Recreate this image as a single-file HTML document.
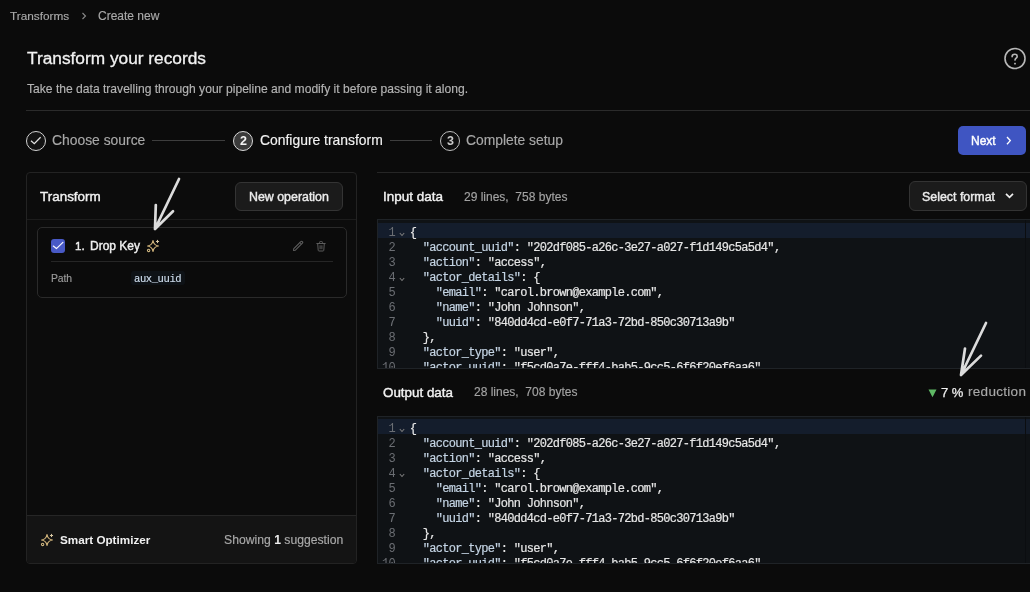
<!DOCTYPE html>
<html><head><meta charset="utf-8"><style>
html,body{margin:0;padding:0;}
body{width:1030px;height:592px;overflow:hidden;background:#0b0b0b;position:relative;font-family:"Liberation Sans",sans-serif;}
.t{position:absolute;white-space:pre;line-height:1;will-change:transform;}
.r{position:absolute;box-sizing:border-box;}
.code{will-change:transform;position:absolute;box-sizing:border-box;background:#0f1215;border:1px solid #1f2327;border-right:none;overflow:hidden;font-family:"Liberation Mono",monospace;font-size:12px;letter-spacing:-0.70px;}
.code .hl{position:absolute;left:0;top:2.8px;width:100%;height:15px;background:#141d2c;}
.code .sb{position:absolute;left:647px;top:0;width:1px;height:100%;background:#0b0d10;}
.code .ln{position:absolute;left:0;width:17px;text-align:right;color:#6b6e73;line-height:15px;}
.code .fold{position:absolute;left:21px;}
.code .cl{position:absolute;color:#e6e6e6;line-height:15px;white-space:pre;-webkit-text-stroke:0.2px #e6e6e6;}
.code k{color:#c4d4e4;-webkit-text-stroke:0.2px #c4d4e4;}
</style></head><body>
<div class="t" style="left:9.5px;top:10.51px;font-size:11.8px;color:#a9a9a9;font-weight:normal;-webkit-text-stroke:0.15px #a9a9a9;">Transforms</div>
<svg class="r" style="left:80px;top:11px" width="8" height="10" viewBox="0 0 8 10"><path d="M2.5 2 L5.5 5 L2.5 8" stroke="#8a8a8a" stroke-width="1.1" fill="none"/></svg>
<div class="t" style="left:97.5px;top:10.34px;font-size:12px;color:#a9a9a9;font-weight:normal;-webkit-text-stroke:0.15px #a9a9a9;">Create new</div>
<div class="t" style="left:26.5px;top:50.46px;font-size:17.3px;color:#f2f2f2;font-weight:normal;-webkit-text-stroke:0.3px #f2f2f2;">Transform your records</div>
<div class="t" style="left:26.5px;top:83.06px;font-size:12.1px;color:#b4b4b4;font-weight:normal;-webkit-text-stroke:0.15px #b4b4b4;">Take the data travelling through your pipeline and modify it before passing it along.</div>
<svg class="r" style="left:1003px;top:47px" width="24" height="24" viewBox="0 0 24 24"><circle cx="12" cy="11.5" r="10" stroke="#b8b8b8" stroke-width="1.6" fill="none"/><path d="M9.1 9.7 C9.1 8.1 10.3 7.2 11.7 7.2 C13.1 7.2 14.2 8.1 14.2 9.4 C14.2 11 12 11.3 12 13.1" stroke="#b8b8b8" stroke-width="1.6" fill="none" stroke-linecap="round"/><rect x="11.1" y="15.8" width="1.8" height="1.6" rx="0.4" fill="#b8b8b8"/></svg>
<div class="r" style="left:26px;top:110px;width:1004px;height:1px;background:#2b2b2b"></div>
<div class="r" style="left:25.5px;top:130.7px;width:20.2px;height:20.2px;border:1.25px solid #d2d2d2;border-radius:50%;background:#131313"></div>
<svg class="r" style="left:24px;top:130px" width="24" height="22" viewBox="0 0 24 22"><path d="M7 10.8 L10.3 13.7 L16.6 7.3" stroke="#e2e2e2" stroke-width="1.25" fill="none"/></svg>
<div class="t" style="left:52px;top:133.85px;font-size:13.88px;color:#a8a8a8;font-weight:normal;-webkit-text-stroke:0.15px #a8a8a8;">Choose source</div>
<div class="r" style="left:152px;top:140px;width:72.5px;height:1px;background:#3e3e3e"></div>
<div class="r" style="left:232.8px;top:130.7px;width:20.2px;height:20.2px;border:1.3px solid #d8d8d8;border-radius:50%;background:#3b3b3b"></div>
<div class="t" style="left:239.8px;top:135.42px;font-size:12.5px;color:#f4f4f4;font-weight:bold;">2</div>
<div class="t" style="left:259.5px;top:133.73px;font-size:13.9px;color:#f2f2f2;font-weight:normal;-webkit-text-stroke:0.15px #f2f2f2;">Configure transform</div>
<div class="r" style="left:389.5px;top:140px;width:42.0px;height:1px;background:#3e3e3e"></div>
<div class="r" style="left:440px;top:130.7px;width:20.2px;height:20.2px;border:1.2px solid #bdbdbd;border-radius:50%;background:#0e0e0e"></div>
<div class="t" style="left:446.8px;top:135.42px;font-size:12.5px;color:#cacaca;font-weight:bold;">3</div>
<div class="t" style="left:466px;top:133.88px;font-size:13.85px;color:#a8a8a8;font-weight:normal;-webkit-text-stroke:0.15px #a8a8a8;">Complete setup</div>
<div class="r" style="left:958px;top:125.7px;width:68.3px;height:29.8px;border-radius:5px;background:#3f55c2"></div>
<div class="t" style="left:970.9px;top:134.84px;font-size:12px;color:#ffffff;font-weight:normal;-webkit-text-stroke:0.4px #ffffff;">Next</div>
<svg class="r" style="left:1003.6px;top:135.4px" width="9" height="11" viewBox="0 0 9 11"><path d="M3 2 L6.3 5.6 L3 9.2" stroke="#fff" stroke-width="1.35" fill="none"/></svg>
<div class="r" style="left:26px;top:172px;width:331px;height:392px;border:1px solid #232323;border-radius:4px;background:#0c0c0c;overflow:hidden"><div style="position:absolute;left:0;top:46px;width:100%;height:1px;background:#1c1c1c"></div><div style="position:absolute;left:0;top:342px;width:100%;height:48px;box-sizing:border-box;background:#141414;border-top:1px solid #262626"></div></div>
<div class="t" style="left:40px;top:189.91px;font-size:13.45px;color:#f2f2f2;font-weight:normal;-webkit-text-stroke:0.4px #f2f2f2;">Transform</div>
<div class="r" style="left:235.3px;top:181.5px;width:108px;height:29.5px;border:1px solid #343434;border-radius:6px;background:#1b1b1b"></div>
<div class="t" style="left:249px;top:190.90px;font-size:12.4px;color:#ededed;font-weight:normal;-webkit-text-stroke:0.4px #ededed;">New operation</div>
<div class="r" style="left:37px;top:227px;width:310px;height:71px;border:1px solid #2a2a2a;border-radius:5px;background:#0b0b0b"></div>
<div class="r" style="left:50.5px;top:261px;width:282.5px;height:1px;background:#262626"></div>
<div class="r" style="left:51px;top:238.9px;width:14.3px;height:14.3px;border-radius:3px;background:#4859c6"></div>
<svg class="r" style="left:51px;top:239px" width="15" height="15" viewBox="0 0 15 15"><path d="M2.3 7.1 L5.4 9.6 L11.9 3.4" stroke="#f4f6ff" stroke-width="1.25" fill="none" stroke-linecap="round" stroke-linejoin="round"/></svg>
<div class="t" style="left:74.8px;top:240.38px;font-size:11.6px;color:#f0f0f0;font-weight:normal;-webkit-text-stroke:0.4px #f0f0f0;">1.</div>
<div class="t" style="left:89.5px;top:240.14px;font-size:12px;color:#f0f0f0;font-weight:normal;-webkit-text-stroke:0.4px #f0f0f0;">Drop Key</div>
<svg class="r" style="left:146px;top:238.9px" width="14" height="14" viewBox="0 0 14 14"><path d="M7 1.5 Q7.75 6.25 12.4 7 Q7.75 7.75 7 12.4 Q6.25 7.75 1.6 7 Q6.25 6.25 7 1.5 Z" stroke="#d0b37a" stroke-width="1.2" fill="none" stroke-linejoin="round"/><path d="M11.5 1.4 L11.5 3.6 M10.4 2.5 L12.6 2.5" stroke="#ddcca6" stroke-width="1.1" stroke-linecap="round"/><circle cx="2.6" cy="11.4" r="1.2" stroke="#d2b982" stroke-width="1.05" fill="none"/></svg>
<svg class="r" style="left:291px;top:239px" width="14" height="14" viewBox="0 0 14 14"><path d="M2.5 11.5 L2.8 9.6 L9.8 2.6 C10.3 2.1 11 2.1 11.4 2.6 C11.9 3.1 11.9 3.7 11.4 4.2 L4.4 11.2 Z" stroke="#5e5e5e" stroke-width="1.1" fill="none" stroke-linejoin="round"/><path d="M8.8 3.6 L10.4 5.2" stroke="#5e5e5e" stroke-width="1"/></svg>
<svg class="r" style="left:315px;top:239px" width="12" height="14" viewBox="0 0 12 14"><path d="M1.8 4.5 H10.2 M4.6 4.5 V3.3 Q4.6 2.5 5.3 2.5 H6.7 Q7.4 2.5 7.4 3.3 V4.5 M2.7 4.5 L3.2 11.3 Q3.3 12 4 12 H8 Q8.7 12 8.8 11.3 L9.3 4.5 M5.1 6.7 V9.8 M6.9 6.7 V9.8" stroke="#5c5c5c" stroke-width="1" fill="none" stroke-linejoin="round" stroke-linecap="round"/></svg><div class="t" style="left:51.4px;top:274.00px;font-size:10.4px;color:#9b9b9b;font-weight:normal;letter-spacing:-0.15px;-webkit-text-stroke:0.15px #9b9b9b;">Path</div>
<div class="r" style="left:131px;top:270.5px;width:54px;height:14px;border-radius:3px;background:#0e1216"></div>
<div class="t" style="left:134.2px;top:273.51px;font-size:10.5px;color:#cddcec;font-weight:normal;font-family:'Liberation Mono', monospace;letter-spacing:-0.4px;-webkit-text-stroke:0.15px #cddcec;">aux_uuid</div>
<svg class="r" style="left:39.6px;top:533.1px" width="14" height="14" viewBox="0 0 14 14"><path d="M7 1.5 Q7.75 6.25 12.4 7 Q7.75 7.75 7 12.4 Q6.25 7.75 1.6 7 Q6.25 6.25 7 1.5 Z" stroke="#d0b37a" stroke-width="1.2" fill="none" stroke-linejoin="round"/><path d="M11.5 1.4 L11.5 3.6 M10.4 2.5 L12.6 2.5" stroke="#ddcca6" stroke-width="1.1" stroke-linecap="round"/><circle cx="2.6" cy="11.4" r="1.2" stroke="#d2b982" stroke-width="1.05" fill="none"/></svg>
<div class="t" style="left:59.5px;top:534.00px;font-size:11.7px;color:#f0f0f0;font-weight:bold;">Smart Optimizer</div>
<div class="t" style="left:224px;top:534.37px;font-size:12.2px;color:#a9a9a9;font-weight:normal;-webkit-text-stroke:0.15px #a9a9a9;">Showing <b style="color:#f0f0f0">1</b> suggestion</div>
<svg class="r" style="left:0;top:0;z-index:5" width="1030" height="592" viewBox="0 0 1030 592"><g stroke="#dcdcdc" stroke-width="2.7" fill="none" stroke-linecap="round" stroke-linejoin="round"><path d="M179 179 L155 229 M155.8 205 L155 229 L173 211.3"/><path d="M986 323 L961 375 M965 348.5 L961 375 L981 355.6"/></g></svg>
<div class="r" style="left:377px;top:172px;width:653px;height:1px;background:#262626"></div>
<div class="t" style="left:382.7px;top:189.97px;font-size:13.5px;color:#f2f2f2;font-weight:normal;-webkit-text-stroke:0.4px #f2f2f2;">Input data</div>
<div class="t" style="left:464px;top:191.04px;font-size:12px;color:#a3a3a3;font-weight:normal;-webkit-text-stroke:0.15px #a3a3a3;">29 lines,&nbsp; 758 bytes</div>
<div class="r" style="left:909px;top:181.3px;width:117.5px;height:29.3px;border:1px solid #333;border-radius:6px;background:#1b1b1b"></div>
<div class="t" style="left:922px;top:190.70px;font-size:12.4px;color:#ededed;font-weight:normal;-webkit-text-stroke:0.4px #ededed;">Select format</div>
<svg class="r" style="left:1003.5px;top:191px" width="11" height="9" viewBox="0 0 11 9"><path d="M2 2.8 L5.5 6.3 L9 2.8" stroke="#eee" stroke-width="1.7" fill="none"/></svg>
<div class="code" style="left:377px;top:219px;width:653px;height:150px"><div class="hl" style="top:3px;height:15px"></div><div class="sb"></div><div class="ln" style="top:5.7px">1</div><svg class="fold" style="top:12.0px" width="6" height="5" viewBox="0 0 6 5"><path d="M0.8 1 L3 3.5 L5.2 1" stroke="#7c7c7c" stroke-width="1.05" fill="none"/></svg><div class="cl" style="top:5.7px;left:31.8px">{</div><div class="ln" style="top:20.7px">2</div><div class="cl" style="top:20.7px;left:44.8px"><k>"account_uuid"</k>: "202df085-a26c-3e27-a027-f1d149c5a5d4",</div><div class="ln" style="top:35.7px">3</div><div class="cl" style="top:35.7px;left:44.8px"><k>"action"</k>: "access",</div><div class="ln" style="top:50.7px">4</div><svg class="fold" style="top:57.0px" width="6" height="5" viewBox="0 0 6 5"><path d="M0.8 1 L3 3.5 L5.2 1" stroke="#7c7c7c" stroke-width="1.05" fill="none"/></svg><div class="cl" style="top:50.7px;left:44.8px"><k>"actor_details"</k>: {</div><div class="ln" style="top:65.7px">5</div><div class="cl" style="top:65.7px;left:57.8px"><k>"email"</k>: "carol.brown@example.com",</div><div class="ln" style="top:80.7px">6</div><div class="cl" style="top:80.7px;left:57.8px"><k>"name"</k>: "John Johnson",</div><div class="ln" style="top:95.7px">7</div><div class="cl" style="top:95.7px;left:57.8px"><k>"uuid"</k>: "840dd4cd-e0f7-71a3-72bd-850c30713a9b"</div><div class="ln" style="top:110.7px">8</div><div class="cl" style="top:110.7px;left:44.8px">},</div><div class="ln" style="top:125.7px">9</div><div class="cl" style="top:125.7px;left:44.8px"><k>"actor_type"</k>: "user",</div><div class="ln" style="top:140.7px">10</div><div class="cl" style="top:140.7px;left:44.8px"><k>"actor_uuid"</k>: "f5cd0a7e-fff4-bab5-9cc5-6f6f20ef6aa6",</div></div>
<div class="t" style="left:382.8px;top:385.66px;font-size:13.4px;color:#f2f2f2;font-weight:normal;-webkit-text-stroke:0.4px #f2f2f2;">Output data</div>
<div class="t" style="left:473.5px;top:386.44px;font-size:12px;color:#a3a3a3;font-weight:normal;-webkit-text-stroke:0.15px #a3a3a3;">28 lines,&nbsp; 708 bytes</div>
<svg class="r" style="left:927.5px;top:388.5px" width="9" height="9" viewBox="0 0 9 9"><path d="M0.5 0.5 L8.5 0.5 L4.5 8.2 Z" fill="#5fb865"/></svg>
<div class="t" style="left:940.5px;top:385.80px;font-size:13px;color:#f0f0f0;font-weight:normal;-webkit-text-stroke:0.25px #f0f0f0;">7 %</div>
<div class="t" style="left:967.5px;top:385.37px;font-size:13.5px;color:#a9a9a9;font-weight:normal;letter-spacing:0.3px;-webkit-text-stroke:0.15px #a9a9a9;">reduction</div>
<div class="code" style="left:377px;top:416px;width:653px;height:148px"><div class="hl" style="top:1.5px;height:15.5px"></div><div class="sb"></div><div class="ln" style="top:4.7px">1</div><svg class="fold" style="top:11.0px" width="6" height="5" viewBox="0 0 6 5"><path d="M0.8 1 L3 3.5 L5.2 1" stroke="#7c7c7c" stroke-width="1.05" fill="none"/></svg><div class="cl" style="top:4.7px;left:31.8px">{</div><div class="ln" style="top:19.7px">2</div><div class="cl" style="top:19.7px;left:44.8px"><k>"account_uuid"</k>: "202df085-a26c-3e27-a027-f1d149c5a5d4",</div><div class="ln" style="top:34.7px">3</div><div class="cl" style="top:34.7px;left:44.8px"><k>"action"</k>: "access",</div><div class="ln" style="top:49.7px">4</div><svg class="fold" style="top:56.0px" width="6" height="5" viewBox="0 0 6 5"><path d="M0.8 1 L3 3.5 L5.2 1" stroke="#7c7c7c" stroke-width="1.05" fill="none"/></svg><div class="cl" style="top:49.7px;left:44.8px"><k>"actor_details"</k>: {</div><div class="ln" style="top:64.7px">5</div><div class="cl" style="top:64.7px;left:57.8px"><k>"email"</k>: "carol.brown@example.com",</div><div class="ln" style="top:79.7px">6</div><div class="cl" style="top:79.7px;left:57.8px"><k>"name"</k>: "John Johnson",</div><div class="ln" style="top:94.7px">7</div><div class="cl" style="top:94.7px;left:57.8px"><k>"uuid"</k>: "840dd4cd-e0f7-71a3-72bd-850c30713a9b"</div><div class="ln" style="top:109.7px">8</div><div class="cl" style="top:109.7px;left:44.8px">},</div><div class="ln" style="top:124.7px">9</div><div class="cl" style="top:124.7px;left:44.8px"><k>"actor_type"</k>: "user",</div><div class="ln" style="top:139.7px">10</div><div class="cl" style="top:139.7px;left:44.8px"><k>"actor_uuid"</k>: "f5cd0a7e-fff4-bab5-9cc5-6f6f20ef6aa6",</div></div>
</body></html>
